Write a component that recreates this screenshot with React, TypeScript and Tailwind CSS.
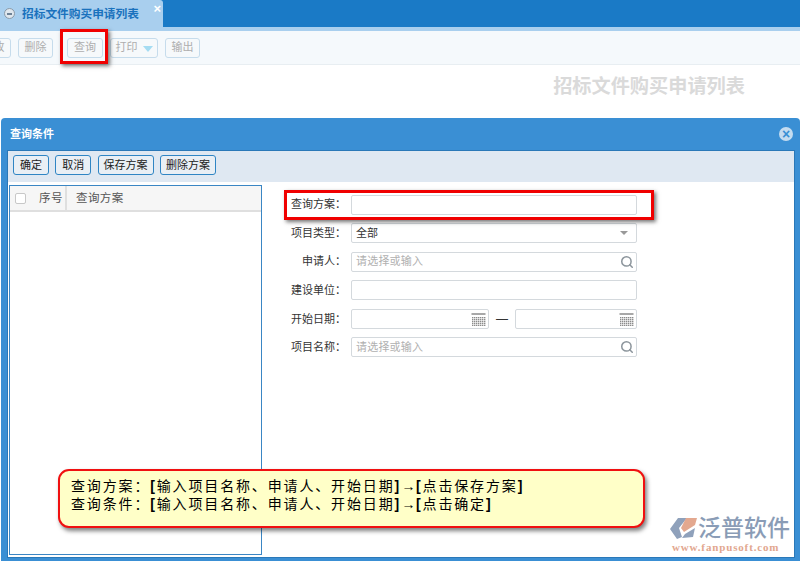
import { Search } from 'lucide-react';

const FONT = "font-['Liberation_Sans','Noto_Sans_CJK_SC',sans-serif]";

function CalendarGlyph() {
  const cells = [];
  for (let y = 5; y < 14; y += 2) {
    for (let x = 1; x < 14; x += 2) {
      cells.push(<rect key={`${x}-${y}`} x={x} y={y} width="1.4" height="1.4" fill="#8c8c8c" />);
    }
  }
  return (
    <svg width="15" height="14" viewBox="0 0 15 14" className="shrink-0">
      <rect x="0.5" y="1" width="14" height="2" fill="#a8a8a8" />
      {cells}
    </svg>
  );
}

function ToolButton({ label, caret, className = '' }: { label: string; caret?: boolean; className?: string }) {
  return (
    <div
      className={`flex h-[20px] items-center justify-center gap-[5px] whitespace-nowrap rounded-[3px] border border-[#c6dcec] bg-[#f6f9fb] text-[11px] text-[#aeaeae] ${className}`}
    >
      {label}
      {caret && <span className="mt-[2px] h-0 w-0 border-x-[5px] border-t-[6px] border-x-transparent border-t-[#a5dcf2]" />}
    </div>
  );
}

function DialogButton({ label, className }: { label: string; className: string }) {
  return (
    <div className={`flex h-[20px] items-center justify-center rounded-[3px] border border-[#2f85c4] bg-[#e9eff5] text-[11px] text-[#222] ${className}`}>
      {label}
    </div>
  );
}

function Field({ label, children }: { label: string; children: React.ReactNode }) {
  return (
    <div className="flex h-[20px] items-center">
      <div className="w-[73px] shrink-0 pr-[5px] text-right text-[11px] text-[#333]">{label}：</div>
      {children}
    </div>
  );
}

function Box({ text, icon, className = 'w-[286px]' }: { text?: string; icon?: React.ReactNode; className?: string }) {
  return (
    <div className={`flex h-[20px] items-center justify-between rounded-[2px] border border-[#d4d9dd] bg-white pl-[4px] pr-[2px] ${className}`}>
      <span className="text-[11px] tracking-[0.2px] text-[#b0b0b0]">{text}</span>
      {icon}
    </div>
  );
}

function Arrow() {
  return <span className="inline-block w-[15px] text-center tracking-normal">→</span>;
}

export default function App() {
  return (
    <div className={`relative flex h-[561px] w-[800px] flex-col overflow-hidden bg-white ${FONT}`}>
      {/* tab strip */}
      <div className="flex h-[27px] shrink-0 bg-[#1a7ac6]">
        <div className="relative flex w-[163px] items-center gap-[7px] rounded-tr-[3px] bg-[#a9cfee] pl-[4px]">
          <span className="flex h-[11px] w-[11px] items-center justify-center rounded-full border border-[#8a9aa8] bg-[#dfe7ee]">
            <span className="h-[2px] w-[5px] bg-[#6d8296]" />
          </span>
          <span className="text-[11.7px] font-bold text-[#1a72bd]">招标文件购买申请列表</span>
          <span className="absolute right-[2px] top-[2px] text-[13px] font-bold leading-[14px] text-white">×</span>
        </div>
      </div>
      <div className="h-[4px] shrink-0 bg-[#a9cfee]" />

      {/* toolbar */}
      <div className="flex h-[34px] shrink-0 items-center gap-[7px] border-b border-[#e8eef2] bg-[#f5f9fc]">
        <ToolButton label="修改" className="ml-[-24px] w-[35px]" />
        <ToolButton label="删除" className="w-[35px]" />
        <ToolButton label="查询" className="ml-[7px] w-[36px] bg-[#f2f4f5]" />
        <ToolButton label="打印" caret className="w-[48px]" />
        <ToolButton label="输出" className="w-[35px]" />
      </div>

      {/* page title */}
      <div className="flex h-[53px] shrink-0 items-center justify-end pb-[9px] pr-[55px] text-[19.2px] font-bold text-[#dadada]">
        招标文件购买申请列表
      </div>

      {/* query dialog */}
      <div className="ml-[1px] flex min-h-0 flex-1 flex-col rounded-t-[4px] bg-[#3a8fd4] pb-[3px] pl-[6px] pr-[5px]">
        <div className="flex h-[32px] shrink-0 items-center justify-between pl-[3px] pr-[2px]">
          <span className="text-[11px] font-bold text-white">查询条件</span>
          <span className="flex h-[14px] w-[14px] items-center justify-center rounded-full bg-[#c4dcf0] text-[14px] font-bold leading-none text-[#3a8fd4]">
            ×
          </span>
        </div>
        <div className="flex min-h-0 flex-1 flex-col border border-[#2a78b8] bg-white">
          <div className="flex h-[31px] shrink-0 items-start gap-[6.3px] bg-[#dfe8f2] pl-[5px] pt-[4px]">
            <DialogButton label="确定" className="w-[36px]" />
            <DialogButton label="取消" className="w-[36px]" />
            <DialogButton label="保存方案" className="w-[56px]" />
            <DialogButton label="删除方案" className="w-[56px]" />
          </div>
          <div className="flex min-h-0 flex-1 pb-[2px] pl-[1px] pt-[3px]">
            {/* saved queries list */}
            <div className="w-[253px] shrink-0 border border-[#3a86c4]">
              <div className="flex h-[26px] items-center border-b-2 border-[#dfdfdf] bg-[#f6f6f6] text-[11.5px] tracking-[0.4px] text-[#555]">
                <span className="ml-[5px] h-[11px] w-[11px] rounded-[2px] border border-[#c8c8c8] bg-white" />
                <span className="ml-[13px] w-[28px] whitespace-nowrap border-r-2 border-[#dfdfdf] leading-[24px]">序号</span>
                <span className="ml-[9px] pt-[1px]">查询方案</span>
              </div>
            </div>
            {/* form */}
            <div className="flex flex-col gap-[8.6px] pl-[16px] pt-[9.5px]">
              <Field label="查询方案">
                <Box />
              </Field>
              <Field label="项目类型">
                <div className="flex h-[20px] w-[286px] items-center justify-between rounded-[2px] border border-[#d4d9dd] bg-white pl-[4px] pr-[8px]">
                  <span className="text-[11px] text-[#333]">全部</span>
                  <span className="h-0 w-0 border-x-[4px] border-t-[4px] border-x-transparent border-t-[#999]" />
                </div>
              </Field>
              <Field label="申请人">
                <Box text="请选择或输入" icon={<Search size={14} strokeWidth={2.6} className="text-[#8c959c]" />} />
              </Field>
              <Field label="建设单位">
                <Box />
              </Field>
              <Field label="开始日期">
                <Box className="w-[138px]" icon={<CalendarGlyph />} />
                <span className="w-[26px] text-center text-[12px] text-[#333]">—</span>
                <Box className="w-[122px]" icon={<CalendarGlyph />} />
              </Field>
              <Field label="项目名称">
                <Box text="请选择或输入" icon={<Search size={14} strokeWidth={2.6} className="text-[#8c959c]" />} />
              </Field>
            </div>
          </div>
        </div>
      </div>

      {/* annotation overlays */}
      <div className="absolute left-[60px] top-[29px] h-[35px] w-[48px] border-[3px] border-[#f00000] shadow-[2px_2px_4px_rgba(0,0,0,0.55)]" />
      <div className="absolute left-[284px] top-[190px] h-[30px] w-[370px] border-[3px] border-[#f00000] shadow-[2px_2px_4px_rgba(0,0,0,0.55)]" />

      <div className="absolute left-[58px] top-[469px] flex h-[59px] w-[587px] flex-col whitespace-nowrap rounded-[11px] border-2 border-[#f01010] bg-[#ffffc8] pl-[11px] pt-[6px] text-[14px] leading-[18px] tracking-[1.85px] text-black shadow-[2px_3px_4px_rgba(0,0,0,0.5)]">
        <span>查询方案：<b>[</b>输入项目名称、申请人、开始日期<b>]</b><Arrow /><b>[</b>点击保存方案<b>]</b></span>
        <span>查询条件：<b>[</b>输入项目名称、申请人、开始日期<b>]</b><Arrow /><b>[</b>点击确定<b>]</b></span>
      </div>

      {/* logo */}
      <div className="absolute left-[670px] top-[516px] flex flex-col">
        <div className="flex items-center">
          <svg width="29" height="23" viewBox="0 0 29 23" className="shrink-0">
            <path d="M8 1 L17 1 L9 11 L12 20 L7 22 L0 12 Z" fill="#8fa1bb" />
            <path d="M16 1 L27 1 L25 8 L14 15 L11 11 Z" fill="#e3a88f" />
            <path d="M15 17 L25 11 L23 20 L12 21 Z" fill="#8fa1bb" />
          </svg>
          <span className="ml-[-1px] whitespace-nowrap text-[23px] font-medium leading-[25px] text-[#8a9cb6]">泛普软件</span>
        </div>
        <span className="ml-[2px] whitespace-nowrap font-['Liberation_Serif',serif] text-[11px] font-bold leading-[12px] tracking-[0.85px] text-[#e2a78f]">
          www.fanpusoft.com
        </span>
      </div>
    </div>
  );
}
